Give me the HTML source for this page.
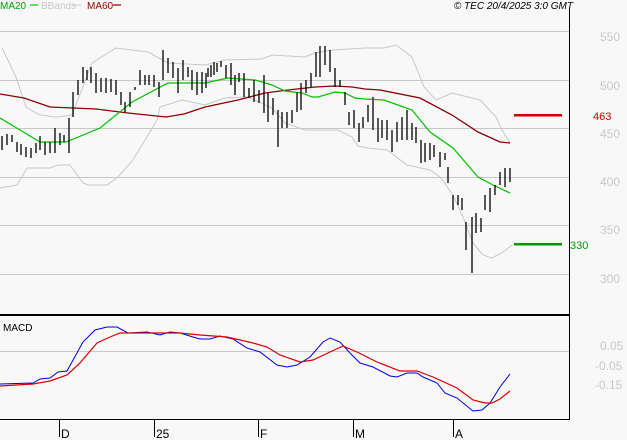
<!DOCTYPE html>
<html><head><meta charset="utf-8"><style>
html,body{margin:0;padding:0;background:#f8f8f8;}
svg{display:block;font-family:"Liberation Sans",sans-serif;}
</style></head><body>
<svg width="627" height="440" viewBox="0 0 627 440" xmlns="http://www.w3.org/2000/svg">
<rect width="627" height="440" fill="#f8f8f8"/>
<g stroke="#c8c8c8" stroke-width="1">
<line x1="0" y1="31.5" x2="569" y2="31.5"/>
<line x1="0" y1="80.5" x2="569" y2="80.5"/>
<line x1="0" y1="128.5" x2="569" y2="128.5"/>
<line x1="0" y1="177.5" x2="569" y2="177.5"/>
<line x1="0" y1="225.5" x2="569" y2="225.5"/>
<line x1="0" y1="274.5" x2="569" y2="274.5"/>
<line x1="0" y1="351.5" x2="569" y2="351.5"/>
</g>
<g fill="#c8c8c8" font-size="12">
<text x="600" y="41">550</text><text x="600" y="90">500</text><text x="600" y="138">450</text>
<text x="600" y="186">400</text><text x="600" y="234">350</text><text x="600" y="283">300</text>
<text x="600" y="350">0.05</text><text x="595" y="370">-0.05</text><text x="595" y="389">-0.15</text>
</g>
<g fill="none" stroke="#c8c8c8" stroke-width="1">
<polyline points="2,48 16,77 26,107 40,115 56,117 72,115 92,63 116,48 148,52 168,63 205,65 225,60 262,59 272,55 305,57 315,53 332,50 365,48 384,48 396,45 412,57 424,87 436,100 452,93 480,100 496,117 502,130 510,143"/>
<polyline points="0,188 17,185 27,168 50,168 58,165 70,165 83,183 88,185 107,185 118,177 133,160 145,140 157,120 160,107 182,100 205,105 225,98 248,97 272,108 285,123 305,130 338,130 352,137 358,146 368,148 387,150 407,165 430,170 440,177 453,195 463,217 473,243 483,255 492,258 503,252 512,245"/>
</g>
<polyline fill="none" stroke="#8b0000" stroke-width="1.3" points="0,94 24,98 50,107 96,109 128,113 166,117 184,114 205,107 238,100 265,93 288,90 315,87 335,86 352,87 365,89 380,90 420,98 452,115 478,132 500,142 510,143"/>
<polyline fill="none" stroke="#00c000" stroke-width="1.2" points="0,118 20,130 40,142 66,142 100,128 132,102 168,83 196,83 205,83 228,78 255,80 272,85 285,91 302,93 312,97 318,97 335,92 345,93 355,98 365,99 384,100 412,110 430,132 453,148 478,177 493,185 510,193"/>
<g stroke="#000" stroke-width="1.3">
<line x1="2" y1="136" x2="2" y2="150"/><line x1="7" y1="134" x2="7" y2="145"/><line x1="12" y1="135" x2="12" y2="142"/>
<line x1="17" y1="142" x2="17" y2="152"/><line x1="21" y1="144" x2="21" y2="155"/><line x1="26" y1="147" x2="26" y2="157"/>
<line x1="31" y1="148" x2="31" y2="158"/><line x1="36" y1="143" x2="36" y2="153"/><line x1="40" y1="136" x2="40" y2="150"/>
<line x1="45" y1="142" x2="45" y2="155"/><line x1="50" y1="142" x2="50" y2="153"/><line x1="55" y1="128" x2="55" y2="153"/>
<line x1="60" y1="133" x2="60" y2="145"/><line x1="64" y1="135" x2="64" y2="142"/><line x1="69" y1="118" x2="69" y2="153"/>
<line x1="73" y1="92" x2="73" y2="117"/><line x1="78" y1="80" x2="78" y2="95"/><line x1="83" y1="67" x2="83" y2="83"/>
<line x1="87" y1="70" x2="87" y2="80"/><line x1="91" y1="67" x2="91" y2="83"/><line x1="96" y1="73" x2="96" y2="93"/>
<line x1="101" y1="78" x2="101" y2="92"/><line x1="106" y1="78" x2="106" y2="93"/><line x1="111" y1="79" x2="111" y2="92"/>
<line x1="116" y1="80" x2="116" y2="95"/><line x1="121" y1="92" x2="121" y2="105"/><line x1="125" y1="102" x2="125" y2="112"/>
<line x1="130" y1="92" x2="130" y2="107"/><line x1="135" y1="87" x2="135" y2="90"/><line x1="140" y1="70" x2="140" y2="85"/>
<line x1="145" y1="75" x2="145" y2="85"/><line x1="149" y1="75" x2="149" y2="85"/><line x1="154" y1="75" x2="154" y2="87"/>
<line x1="159" y1="82" x2="159" y2="97"/><line x1="163" y1="50" x2="163" y2="80"/><line x1="168" y1="58" x2="168" y2="73"/>
<line x1="173" y1="62" x2="173" y2="78"/><line x1="178" y1="68" x2="178" y2="93"/><line x1="183" y1="60" x2="183" y2="80"/>
<line x1="188" y1="67" x2="188" y2="77"/><line x1="192" y1="70" x2="192" y2="90"/><line x1="197" y1="72" x2="197" y2="95"/>
<line x1="202" y1="72" x2="202" y2="93"/>
<line x1="206" y1="73" x2="206" y2="88"/><line x1="208" y1="68" x2="208" y2="77"/><line x1="211" y1="65" x2="211" y2="77"/>
<line x1="214" y1="62" x2="214" y2="75"/><line x1="217" y1="63" x2="217" y2="72"/><line x1="221" y1="61" x2="221" y2="67"/>
<line x1="226" y1="65" x2="226" y2="78"/><line x1="231" y1="63" x2="231" y2="85"/><line x1="235" y1="75" x2="235" y2="95"/>
<line x1="239" y1="73" x2="239" y2="82"/><line x1="244" y1="73" x2="244" y2="97"/><line x1="249" y1="88" x2="249" y2="98"/>
<line x1="254" y1="80" x2="254" y2="102"/><line x1="259" y1="90" x2="259" y2="103"/><line x1="264" y1="75" x2="264" y2="113"/>
<line x1="268" y1="93" x2="268" y2="122"/><line x1="273" y1="98" x2="273" y2="115"/><line x1="278" y1="110" x2="278" y2="147"/>
<line x1="282" y1="112" x2="282" y2="128"/><line x1="287" y1="112" x2="287" y2="128"/><line x1="292" y1="110" x2="292" y2="123"/>
<line x1="297" y1="92" x2="297" y2="112"/><line x1="301" y1="83" x2="301" y2="110"/><line x1="306" y1="80" x2="306" y2="93"/>
<line x1="311" y1="73" x2="311" y2="87"/><line x1="316" y1="52" x2="316" y2="77"/><line x1="320" y1="46" x2="320" y2="77"/>
<line x1="325" y1="46" x2="325" y2="65"/><line x1="330" y1="50" x2="330" y2="72"/><line x1="335" y1="68" x2="335" y2="87"/>
<line x1="340" y1="80" x2="340" y2="87"/><line x1="345" y1="92" x2="345" y2="105"/><line x1="349" y1="112" x2="349" y2="125"/>
<line x1="354" y1="110" x2="354" y2="128"/><line x1="359" y1="123" x2="359" y2="142"/><line x1="363" y1="117" x2="363" y2="128"/>
<line x1="368" y1="105" x2="368" y2="122"/><line x1="373" y1="97" x2="373" y2="130"/>
<line x1="378" y1="118" x2="378" y2="142"/><line x1="382" y1="120" x2="382" y2="138"/><line x1="387" y1="120" x2="387" y2="140"/>
<line x1="392" y1="130" x2="392" y2="152"/><line x1="397" y1="122" x2="397" y2="142"/><line x1="402" y1="117" x2="402" y2="140"/>
<line x1="407" y1="110" x2="407" y2="140"/><line x1="412" y1="123" x2="412" y2="140"/><line x1="416" y1="127" x2="416" y2="143"/>
<line x1="421" y1="140" x2="421" y2="163"/><line x1="425" y1="143" x2="425" y2="162"/><line x1="430" y1="143" x2="430" y2="160"/>
<line x1="434" y1="145" x2="434" y2="157"/><line x1="440" y1="152" x2="440" y2="167"/><line x1="445" y1="153" x2="445" y2="160"/>
<line x1="448" y1="167" x2="448" y2="183"/><line x1="453" y1="195" x2="453" y2="210"/><line x1="458" y1="195" x2="458" y2="205"/>
<line x1="462" y1="198" x2="462" y2="210"/><line x1="466" y1="222" x2="466" y2="250"/><line x1="472" y1="217" x2="472" y2="273"/>
<line x1="476" y1="213" x2="476" y2="233"/><line x1="481" y1="218" x2="481" y2="232"/><line x1="485" y1="195" x2="485" y2="210"/>
<line x1="490" y1="188" x2="490" y2="212"/><line x1="495" y1="185" x2="495" y2="195"/><line x1="500" y1="172" x2="500" y2="185"/>
<line x1="505" y1="168" x2="505" y2="187"/><line x1="510" y1="168" x2="510" y2="182"/>
</g>
<rect x="514" y="114" width="48" height="2.5" fill="#cc0000"/>
<text x="593" y="120" font-size="11" fill="#cc0000">463</text>
<rect x="514" y="243" width="48" height="2.5" fill="#009900"/>
<text x="570" y="249" font-size="11" fill="#009900">330</text>
<text x="0" y="9" font-size="10" fill="#00a000">MA20</text>
<line x1="30" y1="5" x2="38" y2="5" stroke="#00c000" stroke-width="1.2"/>
<text x="41" y="9" font-size="10" fill="#c8c8c8">BBands</text>
<line x1="73" y1="5" x2="81" y2="5" stroke="#c8c8c8"/>
<text x="87" y="9" font-size="10" fill="#8b0000">MA60</text>
<line x1="113" y1="5" x2="121" y2="5" stroke="#8b0000" stroke-width="1.2"/>
<text x="573" y="9" font-size="10" font-style="italic" fill="#000" text-anchor="end">© TEC 20/4/2025 3:0 GMT</text>
<line x1="569.5" y1="9" x2="569.5" y2="419" stroke="#000" stroke-width="1"/>
<rect x="0" y="314" width="570" height="2" fill="#000"/>
<line x1="0" y1="419.5" x2="570" y2="419.5" stroke="#000"/>
<text x="3" y="331" font-size="10" fill="#000">MACD</text>
<polyline fill="none" stroke="#0000dd" stroke-width="1" points="0,384 33,383 40,379 50,378 58,372 67,371 83,342 95,330 107,327 117,327 128,333 147,332 160,335 170,332 180,333 193,337 200,339 210,339 220,336 233,339 247,348 260,352 277,365 287,367 297,365 310,357 323,342 330,338 340,342 350,353 360,363 373,367 390,376 397,377 407,373 417,373 423,377 437,383 445,393 457,398 473,411 482,410 490,403 500,387 510,374"/>
<polyline fill="none" stroke="#dd0000" stroke-width="1.2" points="0,386 33,384 50,381 67,375 80,363 97,343 110,337 120,333 147,333 180,333 200,335 227,337 253,343 267,347 280,355 300,362 313,360 330,352 343,346 357,352 377,362 400,371 417,371 433,377 457,388 473,400 485,403 492,403 500,399 510,391"/>
<g stroke="#000"><line x1="59.5" y1="419" x2="59.5" y2="437"/><line x1="154.5" y1="419" x2="154.5" y2="437"/><line x1="258.5" y1="419" x2="258.5" y2="437"/><line x1="353.5" y1="419" x2="353.5" y2="437"/><line x1="453.5" y1="419" x2="453.5" y2="437"/></g>
<g font-size="12" fill="#000"><text x="61" y="438">D</text><text x="156" y="438">25</text><text x="260" y="438">F</text><text x="355" y="438">M</text><text x="455" y="438">A</text></g>
</svg>
</body></html>
